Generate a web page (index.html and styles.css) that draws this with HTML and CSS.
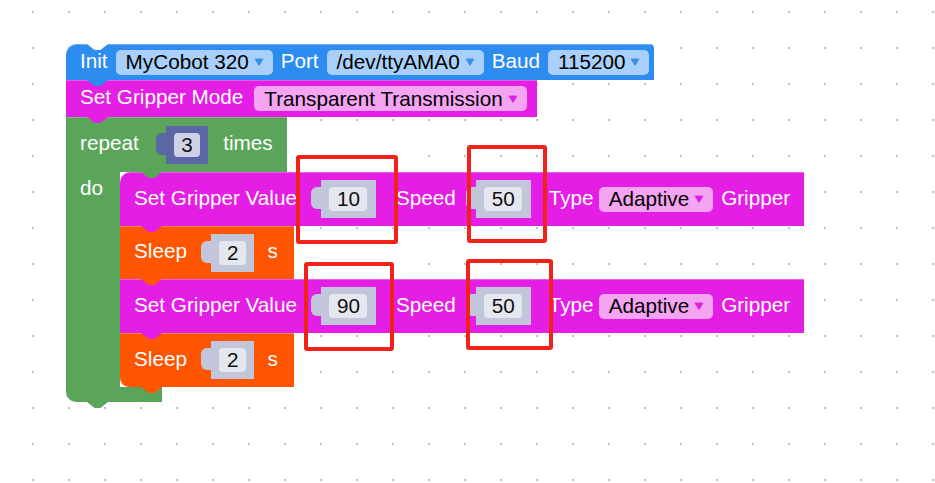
FILE: index.html
```html
<!DOCTYPE html>
<html>
<head>
<meta charset="utf-8">
<link rel="stylesheet" href="styles.css">
</head>
<body>
<div class="workspace">
  <div class="stack">
    <div class="block init blue">
      <span class="lbl">Init</span>
      <span class="dd">MyCobot 320<svg class="arr" viewBox="0 0 10 8" width="10" height="8"><path d="M0.5 0.8 Q5 0 9.5 0.8 L5.6 7.3 Q5 8 4.4 7.3 Z"/></svg></span>
      <span class="lbl">Port</span>
      <span class="dd">/dev/ttyAMA0<svg class="arr" viewBox="0 0 10 8" width="10" height="8"><path d="M0.5 0.8 Q5 0 9.5 0.8 L5.6 7.3 Q5 8 4.4 7.3 Z"/></svg></span>
      <span class="lbl">Baud</span>
      <span class="dd">115200<svg class="arr" viewBox="0 0 10 8" width="10" height="8"><path d="M0.5 0.8 Q5 0 9.5 0.8 L5.6 7.3 Q5 8 4.4 7.3 Z"/></svg></span>
    </div>
    <div class="block mode mag">
      <span class="lbl">Set Gripper Mode</span>
      <span class="dd wide-gap">Transparent Transmission<svg class="arr" viewBox="0 0 10 8" width="10" height="8"><path d="M0.5 0.8 Q5 0 9.5 0.8 L5.6 7.3 Q5 8 4.4 7.3 Z"/></svg></span>
    </div>
    <div class="repeat">
      <div class="c-top">
        <span class="lbl">repeat</span>
        <span class="num dark rep"><span class="v">3</span></span>
        <span class="lbl">times</span>
      </div>
      <div class="c-mid">
        <div class="c-arm"><span class="lbl">do</span></div>
        <div class="c-body">
          <div class="block gripper mag first">
            <span class="lbl">Set Gripper Value</span>
            <span class="num"><span class="v">10</span></span>
            <span class="lbl">Speed</span>
            <span class="num tight"><span class="v">50</span></span>
            <span class="lbl">Type</span>
            <span class="dd near">Adaptive<svg class="arr" viewBox="0 0 10 8" width="10" height="8"><path d="M0.5 0.8 Q5 0 9.5 0.8 L5.6 7.3 Q5 8 4.4 7.3 Z"/></svg></span>
            <span class="lbl">Gripper</span>
          </div>
          <div class="block sleep s1">
            <span class="lbl">Sleep</span>
            <span class="num snum"><span class="v">2</span></span>
            <span class="lbl">s</span>
          </div>
          <div class="block gripper mag">
            <span class="lbl">Set Gripper Value</span>
            <span class="num"><span class="v">90</span></span>
            <span class="lbl">Speed</span>
            <span class="num tight"><span class="v">50</span></span>
            <span class="lbl">Type</span>
            <span class="dd near">Adaptive<svg class="arr" viewBox="0 0 10 8" width="10" height="8"><path d="M0.5 0.8 Q5 0 9.5 0.8 L5.6 7.3 Q5 8 4.4 7.3 Z"/></svg></span>
            <span class="lbl">Gripper</span>
          </div>
          <div class="block sleep s2 last">
            <span class="lbl">Sleep</span>
            <span class="num snum"><span class="v">2</span></span>
            <span class="lbl">s</span>
          </div>
        </div>
      </div>
      <div class="c-bottom"></div>
    </div>
  </div>
  <div class="mark m1"></div>
  <div class="mark m2"></div>
  <div class="mark m3"></div>
  <div class="mark m4"></div>
</div>
</body>
</html>
```

FILE: styles.css
```css
* { box-sizing: border-box; }
html, body { margin: 0; padding: 0; }
body {
  width: 935px;
  height: 483px;
  overflow: hidden;
  background-color: #fff;
  background-image: radial-gradient(circle at center, #c4c4c4 0 1.1px, transparent 1.6px);
  background-size: 36px 36px;
  background-position: 15px -6px;
  font-family: "Liberation Sans", Arial, sans-serif;
  font-size: 20.7px;
}
.workspace {
  position: relative;
  width: 935px;
  height: 483px;
  padding: 44px 0 0 66px;
}
.stack {
  display: flex;
  flex-direction: column;
  align-items: flex-start;
}
.block {
  position: relative;
  display: flex;
  align-items: center;
  gap: 8px;
  padding-left: 14px;
  color: #fff;
  white-space: nowrap;
  box-shadow: inset 0 1px 0 rgba(255,255,255,0.28);
}
.block::after {
  content: "";
  position: absolute;
  left: 21px;
  bottom: -6px;
  width: 21px;
  height: 6px;
  background-color: inherit;
  clip-path: polygon(0 0, 100% 0, 64% 100%, 36% 100%);
  z-index: 1;
}
.lbl { line-height: 24px; padding-bottom: 3px; }
.c-arm .lbl { padding-bottom: 0; }

.blue { background-color: #2d8cf0; }
.mag { background-color: #e41ee4; }
.sleep { background-color: #ff5500; }

.init {
  width: 588px;
  height: 36px;
  border-radius: 11px 4px 0 0;
}
.init::before {
  content: "";
  position: absolute;
  left: 21px;
  top: 0;
  width: 21px;
  height: 6px;
  background: #fff;
  clip-path: polygon(0 0, 100% 0, 64% 100%, 36% 100%);
}
.mode { width: 471px; height: 37px; }

/* dropdown fields */
.dd {
  display: inline-flex;
  align-items: center;
  gap: 5px;
  height: 25px;
  padding: 0 9px 0 10px;
  border-radius: 5px;
  color: #000;
}
.blue .dd { background: #a8d0fa; }
.blue .arr { fill: #3a8ee8; }
.mag .dd { background: #f5a3f3; }
.mag .arr { fill: #e01fe0; }
.dd.wide-gap { margin-left: 3px; }
.dd.near { margin-left: -3px; }

/* repeat block */
.repeat {
  position: relative;
  display: flex;
  flex-direction: column;
  align-items: flex-start;
  color: #fff;
}
.c-top {
  width: 221px;
  height: 55px;
  display: flex;
  align-items: center;
  gap: 8px;
  padding-left: 14px;
  background: #5ba55b;
  box-shadow: inset 0 1px 0 rgba(255,255,255,0.2);
}
.c-mid { display: flex; }
.c-arm {
  width: 54px;
  background: #5ba55b;
  padding: 4px 0 0 14px;
}
.c-body {
  position: relative;
  display: flex;
  flex-direction: column;
  align-items: flex-start;
}
.c-body::before {
  content: "";
  position: absolute;
  left: 21px;
  top: 0;
  width: 21px;
  height: 6px;
  background: #5ba55b;
  clip-path: polygon(0 0, 100% 0, 64% 100%, 36% 100%);
  z-index: 2;
}
.c-bottom {
  position: relative;
  width: 96px;
  height: 15px;
  background: #5ba55b;
  border-bottom-left-radius: 10px;
}
.c-bottom::after {
  content: "";
  position: absolute;
  left: 21px;
  bottom: -6px;
  width: 21px;
  height: 6px;
  background: #5ba55b;
  clip-path: polygon(0 0, 100% 0, 64% 100%, 36% 100%);
}

.gripper { width: 684px; height: 54px; }
.first { border-top-left-radius: 10px; }
.s1 { width: 174px; height: 53px; }
.s2 { width: 174px; height: 54px; }
.last { border-bottom-left-radius: 9px; }

/* number shadow blocks */
.num {
  position: relative;
  display: inline-flex;
  align-items: center;
  height: 38px;
  padding: 0 8.5px;
  margin: 0 12px 0 16px;
  background: #c2c6da;
}
.num::before {
  content: "";
  position: absolute;
  left: -10px;
  top: 7px;
  width: 11px;
  height: 22px;
  background: inherit;
  border-radius: 6px 0 0 6px;
}
.num .v {
  display: inline-flex;
  align-items: center;
  justify-content: center;
  height: 24px;
  padding: 0 7.5px;
  border-radius: 4px;
  background: #e5e7ef;
  color: #111;
}
.num.tight { margin: 0 10px 0 12px; }
.num.snum { margin: 0 5px 0 16px; }
.num.dark { background: #5b67a5; }
.num.dark .v { background: #cfd2e7; padding: 0 7px; }
.num.rep { margin: 0 7px 0 19px; }

/* annotation boxes */
.mark {
  position: absolute;
  border: 4px solid #f2221b;
  border-radius: 3px;
  z-index: 5;
}
.m1 { left: 296px; top: 155px; width: 102px; height: 89px; }
.m2 { left: 467px; top: 145px; width: 80px; height: 98px; }
.m3 { left: 304px; top: 262px; width: 90px; height: 89px; }
.m4 { left: 466px; top: 259px; width: 87px; height: 91px; }
```
